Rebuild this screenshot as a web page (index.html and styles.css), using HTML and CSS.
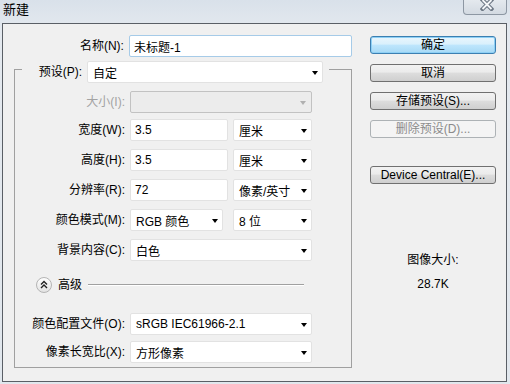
FILE: index.html
```html
<!DOCTYPE html>
<html lang="zh-CN">
<head>
    <meta charset="UTF-8">
    <title>新建</title>
    <link rel="stylesheet" href="styles.css">
</head>
<body>
    <div class="window">
        <div class="titlebar">
            <span class="title">新建</span>
            <div class="close">
                <svg width="14" height="11" viewBox="0 0 14 11">
                    <path d="M2.5 0 L11.5 9 M11.5 0 L2.5 9" stroke="#6d7885" stroke-width="4" stroke-linecap="square" fill="none"/>
                    <path d="M2.5 0 L11.5 9 M11.5 0 L2.5 9" stroke="#f4f6f8" stroke-width="1.8" fill="none"/>
                </svg>
            </div>
        </div>
        <div class="client">
            <div class="left">
                <div class="row name-row">
                    <span class="lbl lbl-name">名称(N):</span>
                    <div class="input focus w-name">未标题-1</div>
                </div>
                <div class="group">
                    <div class="legend">
                        <span class="lbl lbl-preset">预设(P):</span>
                        <div class="select w-preset">自定<i class="arrow"></i></div>
                    </div>
                    <div class="row r-size">
                        <span class="lbl disabled">大小(I):</span>
                        <div class="select off w-full"><i class="arrow"></i></div>
                    </div>
                    <div class="row r-first">
                        <span class="lbl">宽度(W):</span>
                        <div class="input w-num">3.5</div>
                        <div class="select w-unit">厘米<i class="arrow"></i></div>
                    </div>
                    <div class="row">
                        <span class="lbl">高度(H):</span>
                        <div class="input w-num">3.5</div>
                        <div class="select w-unit">厘米<i class="arrow"></i></div>
                    </div>
                    <div class="row">
                        <span class="lbl">分辨率(R):</span>
                        <div class="input w-num">72</div>
                        <div class="select w-unit">像素/英寸<i class="arrow"></i></div>
                    </div>
                    <div class="row">
                        <span class="lbl">颜色模式(M):</span>
                        <div class="select w-mode">RGB 颜色<i class="arrow"></i></div>
                        <div class="select w-unit gap-wide">8 位<i class="arrow"></i></div>
                    </div>
                    <div class="row">
                        <span class="lbl">背景内容(C):</span>
                        <div class="select w-full">白色<i class="arrow"></i></div>
                    </div>
                    <div class="advanced">
                        <svg class="adv-icon" width="16" height="16" viewBox="0 0 16 16">
                            <defs>
                                <linearGradient id="advg" x1="0" y1="0" x2="0" y2="1">
                                    <stop offset="0" stop-color="#ffffff"/>
                                    <stop offset="1" stop-color="#e2e2e2"/>
                                </linearGradient>
                            </defs>
                            <circle cx="8" cy="8" r="7.5" fill="url(#advg)" stroke="#b4b4b4"/>
                            <path d="M5 7.5 L8 4.5 L11 7.5 M5 11 L8 8 L11 11" stroke="#222" stroke-width="1.4" fill="none"/>
                        </svg>
                        <span class="adv-text">高级</span>
                        <span class="adv-line"></span>
                    </div>
                    <div class="row r-profile">
                        <span class="lbl">颜色配置文件(O):</span>
                        <div class="select w-full">sRGB IEC61966-2.1<i class="arrow"></i></div>
                    </div>
                    <div class="row">
                        <span class="lbl">像素长宽比(X):</span>
                        <div class="select w-full">方形像素<i class="arrow"></i></div>
                    </div>
                </div>
            </div>
            <div class="right">
                <div class="btn default">确定</div>
                <div class="btn">取消</div>
                <div class="btn">存储预设(S)...</div>
                <div class="btn disabled-btn">删除预设(D)...</div>
                <div class="btn btn-device">Device Central(E)...</div>
                <div class="size-title">图像大小:</div>
                <div class="size-value">28.7K</div>
            </div>
        </div>
    </div>
</body>
</html>
```

FILE: styles.css
```css
body { margin: 0; font-family: "Liberation Sans", "Noto Sans CJK SC", sans-serif; font-size: 12px; color: #000; background: #dfe6ed; }
.window { width: 510px; height: 384px; background: linear-gradient(#d9e1ea, #e4e9ef 30px, #e1e7ed); box-sizing: border-box; overflow: hidden; }

.titlebar { height: 23px; display: flex; justify-content: space-between; align-items: flex-start; }
.title { font-size: 13px; padding: 2px 0 0 3px; line-height: 16px; }
.close { width: 44px; height: 15px; margin-right: 3px; border: 1px solid #8d97a3; border-top: none; border-radius: 0 0 4px 4px; background: linear-gradient(#e4e9ee, #d3dae2); display: flex; justify-content: center; align-items: flex-start; box-sizing: border-box; }
.close svg { display: block; margin-left: 3px; }

.client { margin-left: 2px; width: 505px; height: 359px; border: 1px solid #5a5f66; box-sizing: border-box; background: #f0f0f0; display: flex; }

.left { width: 349px; padding-top: 11px; }
.right { margin-left: 18px; width: 126px; padding-top: 12px; display: flex; flex-direction: column; align-items: stretch; }

.row { display: flex; align-items: center; height: 22px; gap: 5px; margin-top: 8px; }
.name-row { margin-top: 0; }
.lbl { width: 110px; text-align: right; white-space: nowrap; line-height: 22px; }
.lbl-name { width: 122px; }
.lbl-preset { width: 46px; }
.lbl.disabled { color: #a3a3a3; }

.input, .select { height: 22px; box-sizing: border-box; background: #fff; border: 1px solid #e2e2e2; border-radius: 2px; display: flex; align-items: center; white-space: nowrap; position: relative; }
.input { padding-left: 4px; }
.select { padding-left: 5px; }
.input.focus { border-color: #a6cbe8; }
.select.off { background: #ececec; border-color: #c2c2c2; }

.arrow { position: absolute; right: 4px; top: 9px; width: 0; height: 0; border-left: 3.5px solid transparent; border-right: 3.5px solid transparent; border-top: 4px solid #000; }
.select.off .arrow { border-top-color: #b0b0b0; right: 5px; }

.w-name { width: 225px; }
.w-preset { width: 236px; }
.w-full { width: 182px; }
.w-num { width: 98px; }
.w-unit { width: 79px; }
.w-mode { width: 93px; }
.gap-wide { margin-left: 5px; }

.group { margin: 12px 0 0 11px; width: 338px; border: 1px solid #a0a0a0; box-sizing: border-box; padding-bottom: 4px; }
.legend { display: flex; align-items: center; gap: 5px; width: fit-content; margin: -9px 0 0 7px; padding: 0 6px 0 14px; background: #f0f0f0; }
.r-size { margin-top: 8px; }
.r-first { margin-top: 6px; }
.r-profile { margin-top: 20px; }
.r-profile + .row { margin-top: 6px; }

.advanced { display: flex; align-items: center; height: 16px; margin: 16px 0 0 21px; }
.adv-icon { display: block; }
.adv-text { margin-left: 6px; line-height: 16px; }
.adv-line { margin-left: 6px; width: 216px; height: 1px; background: #a0a0a0; border-bottom: 1px solid #fff; }

.btn { height: 18px; box-sizing: border-box; border: 1px solid #707070; border-radius: 3px; background: linear-gradient(#f2f2f2 0%, #ebebeb 45%, #dddddd 50%, #cfcfcf 100%); text-align: center; line-height: 16px; margin-bottom: 10px; white-space: nowrap; }
.btn.default { border-color: #3c7fb1; box-shadow: inset 0 0 0 1px #8ed0f5; background: linear-gradient(#eaf6fd 0%, #d9f0fc 45%, #bee6fd 50%, #a7d9f5 100%); }
.btn.disabled-btn { border-color: #adb2b5; background: #f4f4f4; color: #8b8b8b; }
.btn-device { margin-top: 18px; }

.size-title { margin-top: 58px; text-align: center; line-height: 16px; }
.size-value { margin-top: 8px; text-align: center; line-height: 16px; }
```
